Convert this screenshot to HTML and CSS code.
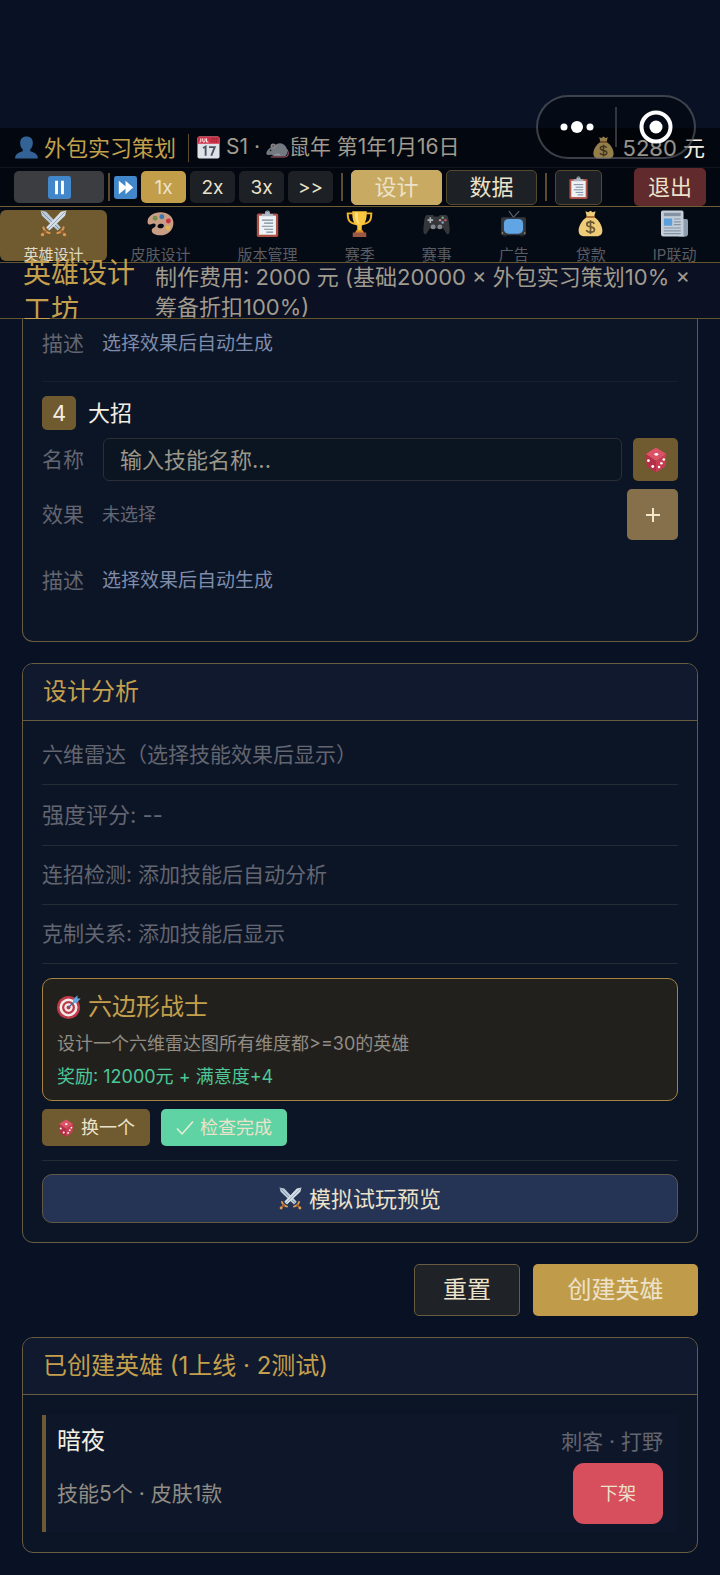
FILE: index.html
```html
<!DOCTYPE html>
<html lang="zh-CN">
<head>
<meta charset="utf-8">
<meta name="viewport" content="width=device-width, initial-scale=1">
<title>英雄设计工坊</title>
<link rel="stylesheet" href="styles.css">
</head>
<body>
<svg class="sprite" aria-hidden="true">
  <symbol id="i-user" viewBox="0 0 24 24"><path fill="#336296" d="M12 .6c4.2 0 6.6 2.6 6.6 6.4 0 3-1 5.500-2.700 6.900v2c2.500 1 8 1.800 8 7.500H.1c0-5.700 5.500-6.500 8-7.500v-2C6.400 12.500 5.400 10 5.400 7 5.400 3.200 7.800.6 12 .6z"/></symbol>
  <symbol id="i-calendar" viewBox="0 0 24 24"><rect x=".5" y=".5" width="23" height="23" rx="2" fill="#dfe3e8"/><path d="M.5 8V2.500a2 2 0 0 1 2-2h19a2 2 0 0 1 2 2V8z" fill="#cf3247"/><path d="M4 2.500v3q0 1-1.500.8M6 2.500v2.600q0 1.200 1.200 1.200t1.200-1.200V2.500M10 2.500v3.800h2" fill="none" stroke="#fff" stroke-width="1"/><path d="M15 3h7M15 5.500h7" stroke="#8e2233" stroke-width="1.200" stroke-dasharray="1.300 1"/><path d="M6.300 12.500 9 11v9.500M12.500 11.600h6l-3.600 9" fill="none" stroke="#4b5664" stroke-width="2"/></symbol>
  <symbol id="i-rat" viewBox="0 0 24 24"><path d="M5 22h14c4 0 4.500-2.500 4-5.500-.3-1.800-1-2.500-2-3" fill="none" stroke="#b9586c" stroke-width="1.100"/><path d="M.5 17C3 12.500 5 11.500 8 11c3-3.500 7-4.200 10-2.500 3.500 2 4.500 6 4 9.500-.4 2-1.500 3-3.500 3H8l-2-1.500-4 .3c-1 0-2-1.300-1.500-2.800z" fill="#737980"/><circle cx="7.500" cy="10.500" r="2.700" fill="#8f8589"/><circle cx="7.500" cy="10.500" r="1.400" fill="#62666d"/><circle cx="4.800" cy="15" r=".8" fill="#15181d"/><path d="M8 20q4-4 8 .5" fill="#90959b"/></symbol>
  <symbol id="i-money" viewBox="0 0 24 24"><path d="M7.500 1.200 10 2l2-1.400L14 2l2.500-.8-1.300 5c5 3 7.800 9 7.300 13-.3 3-2.500 4.200-5 4.200h-11c-2.500 0-4.700-1.200-5-4.200-.5-4 2.300-10 7.300-13z" fill="#efcd78"/><path d="M8.200 6.200h7.600" stroke="#a6642f" stroke-width="1.500"/><path d="M15.300 12.300c-.5-1.300-1.800-1.700-3.300-1.700-1.900 0-3.300.7-3.300 2.200 0 3.200 6.800 1.300 6.800 4.600 0 1.600-1.500 2.400-3.500 2.400-1.800 0-3.200-.6-3.700-2M12 9v12.400" fill="none" stroke="#6b5836" stroke-width="1.500"/></symbol>
  <symbol id="i-pause" viewBox="0 0 24 24"><rect width="24" height="24" rx="2.500" fill="#4187ca"/><path d="M7.400 5h3v14h-3zM13.600 5h3v14h-3z" fill="#fff"/></symbol>
  <symbol id="i-forward" viewBox="0 0 24 24"><rect width="24" height="24" rx="2.500" fill="#4187ca"/><path d="M5 5l7 5.800V5l8 7-8 7v-5.800L5 19z" fill="#fff"/></symbol>
  <symbol id="i-swords" viewBox="0 0 24 24"><path d="M.5.5l5 1L18.500 15.500l-2.800 2.700L1.700 5z" fill="#bccbd8"/><path d="M1.300 1.300 17 17" stroke="#718698" stroke-width=".7"/><path d="M23.500.5l-5 1L5.500 15.500l2.800 2.700L22.300 5z" fill="#d5dfe7"/><path d="M22.700 1.300 7 17" stroke="#8194a5" stroke-width=".7"/><path d="M3 15.500c.8 2.800 2.600 4.300 5.500 5M21 15.500c-.8 2.800-2.600 4.300-5.500 5" fill="none" stroke="#d99a4e" stroke-width="1.900" stroke-linecap="round"/><path d="M5.200 18.600 2.500 21.500M18.800 18.600l2.700 2.900" stroke="#9b5b35" stroke-width="2.200"/><circle cx="2.200" cy="21.900" r="1.500" fill="#d99a4e"/><circle cx="21.800" cy="21.900" r="1.500" fill="#d99a4e"/></symbol>
  <symbol id="i-palette" viewBox="0 0 24 24"><path fill-rule="evenodd" d="M12 2c6.600 0 11.500 4 11.500 9.500C23.500 18 18 22.500 12 22.500c-4.500 0-8-1.800-7.800-4.600.2-2.100 3-2 3.400-3.900.4-1.700-1-2.300-2.600-1.700-1.600.5-4.300 1.500-4.500-1.500C.2 5.500 6 2 12 2zm0 14.200c1.900 0 3-1 3-2.300s-1.300-2-3-1.700c-1.500.3-2.800 1.200-2.700 2.200.1 1.200 1.200 1.800 2.700 1.800z" fill="#c99e84"/><circle cx="7.200" cy="7.400" r="2.200" fill="#75904d"/><circle cx="13.200" cy="6" r="2.200" fill="#3b77b4"/><circle cx="19" cy="9.800" r="2.200" fill="#c83245"/><circle cx="18.700" cy="15.800" r="2.100" fill="#dfb64e"/></symbol>
  <symbol id="i-clipboard" viewBox="0 0 24 24"><rect x="2.500" y="3" width="19" height="21" rx="1.500" fill="#ad5147"/><path d="M4.500 5h15v17h-15z" fill="#eff2f5"/><path d="M7 5.500V3.500h3a2 2 0 0 1 4 0h3v2z" fill="#aeb8c4"/><circle cx="12" cy="2.500" r="1.700" fill="none" stroke="#aeb8c4" stroke-width=".9"/><path d="M7 9h10M9 11.700h8M7 14.400h10M9 17.100h8M11 19.700h6" stroke="#75899c" stroke-width="1"/></symbol>
  <symbol id="i-trophy" viewBox="0 0 24 24"><path d="M6 3H1.500C1.500 9 3 12 9 12.500M18 3h4.500c0 6-1.500 9-7.500 9.500" fill="none" stroke="#f2b32e" stroke-width="1.700"/><path d="M5.500 1h13c0 8-1.500 11-4.500 13v5h-4v-5C7 12 5.500 9 5.500 1z" fill="#fbc63f"/><path d="M8 2h2.500c0 5 .3 8 1.500 11-3-2-4-5-4-11z" fill="#ffe287"/><path d="M9 18h6l1 2.500H8z" fill="#d88b26"/><path d="M6 20h12v4H6z" fill="#9c5844"/></symbol>
  <symbol id="i-gamepad" viewBox="0 0 24 24"><path d="M4 4.500h5l1 1.200h4l1-1.200h5c2 0 2.500 2 3.200 7.500.6 4.500 1.100 9.500-1.200 9.500-1.800 0-2.600-3.700-4-5H6c-1.400 1.300-2.200 5-4 5-2.300 0-1.800-5-1.200-9.500C1.500 6.500 2 4.500 4 4.500z" fill="#343639"/><path d="M6.500 6.500v5M4 9h5" stroke="#aab0b7" stroke-width="1.500"/><circle cx="9" cy="15" r="2.200" fill="#81868c"/><circle cx="15" cy="15" r="2.200" fill="#81868c"/><circle cx="17.500" cy="6.800" r="1.100" fill="#7ca38c"/><circle cx="19.900" cy="9" r="1.100" fill="#c95660"/><circle cx="17.500" cy="11.200" r="1.100" fill="#8aa7c7"/><circle cx="15.200" cy="9" r="1.100" fill="#c2919d"/></symbol>
  <symbol id="i-tv" viewBox="0 0 24 24"><path d="M8 1l4 5.500L17 1" fill="none" stroke="#5c6066" stroke-width="1.100"/><rect x="1" y="6.500" width="22" height="16" rx="1.500" fill="#34393f"/><rect x="3.500" y="8" width="17" height="13" rx="4" fill="#62a5e5"/><path d="M3 22.500h3v1H3zM18 22.500h3v1h-3z" fill="#25282c"/><circle cx="22" cy="20.500" r=".7" fill="#b1a06a"/><circle cx="2.200" cy="20.500" r=".7" fill="#b1a06a"/></symbol>
  <symbol id="i-news" viewBox="0 0 24 24"><path d="M18 8h4.500a1.500 1.500 0 0 1 1.500 1.500V21a2.500 2.500 0 0 1-2.500 2.500H16z" fill="#8e9daf"/><path d="M1.500.5h17a1.500 1.500 0 0 1 1.500 1.500v20l1 1.500H2A2 2 0 0 1 0 21.500V2A1.500 1.500 0 0 1 1.500.5z" fill="#c4ced9"/><path d="M2.500 2.500h15v3h-15z" fill="#8492a3"/><path d="M2.500 7.500h7.500v6.500H2.500z" fill="#5c9edb"/><path d="M11.500 8h6M11.500 10.500h6M11.500 13h6M2.500 16h15M2.500 18.500h15M2.500 21h15" stroke="#8492a3" stroke-width="1"/></symbol>
  <symbol id="i-dice" viewBox="0 0 24 24"><path d="M12 .5 21.500 6.500 12 13 2.500 6.500z" fill="#dc5266"/><path d="M2.500 6.500 12 13v10.500L3.500 18z" fill="#b62f48"/><path d="M21.500 6.500 12 13v10.500L20.500 18z" fill="#c73d53"/><g fill="#fff"><ellipse cx="12.300" cy="6.800" rx="1.800" ry="1.300"/><circle cx="5" cy="12.600" r="1.300"/><circle cx="9" cy="18" r="1.300"/><circle cx="19.200" cy="11.500" r="1.200"/><circle cx="17" cy="15" r="1.200"/><circle cx="14.800" cy="18.500" r="1.200"/></g></symbol>
  <symbol id="i-target" viewBox="0 0 24 24"><circle cx="11.500" cy="12.500" r="11.500" fill="#bd3a49"/><circle cx="11.500" cy="12.500" r="9" fill="#f4ecec"/><circle cx="11.500" cy="12.500" r="6.500" fill="#bd3a49"/><circle cx="11.500" cy="12.500" r="4.200" fill="#f4ecec"/><circle cx="11.500" cy="12.500" r="2" fill="#bd3a49"/><path d="M11.500 12.500 19 5" stroke="#376895" stroke-width="1.300"/><path d="M16 4.500 20.500.3v3.200h3.200L19.500 8H16z" fill="#62a6e2"/></symbol>
</svg>

<div class="capsule">
  <button class="capsule-btn" type="button" aria-label="更多"><svg viewBox="0 0 40 40"><g fill="#fff"><circle cx="7" cy="20" r="3.500"/><circle cx="20" cy="20" r="6"/><circle cx="33" cy="20" r="3.500"/></g></svg></button>
  <span class="capsule-line"></span>
  <button class="capsule-btn" type="button" aria-label="关闭"><svg viewBox="0 0 40 40"><circle cx="20" cy="20" r="14.500" fill="none" stroke="#fff" stroke-width="4"/><circle cx="20" cy="20" r="6.500" fill="#fff"/></svg></button>
</div>

<header class="status">
  <svg class="icon"><use href="#i-user"/></svg>
  <span class="rank">外包实习策划</span>
  <span class="sep"></span>
  <svg class="icon"><use href="#i-calendar"/></svg>
  <span class="date">S1 · <svg class="icon rat"><use href="#i-rat"/></svg>鼠年 第1年1月16日</span>
  <span class="money"><svg class="icon"><use href="#i-money"/></svg>5280 元</span>
</header>

<div class="controls">
  <button class="ctl pause" type="button" aria-label="暂停"><svg class="icon"><use href="#i-pause"/></svg></button>
  <span class="sep"></span>
  <svg class="icon"><use href="#i-forward"/></svg>
  <button class="ctl speed on" type="button">1x</button>
  <button class="ctl speed" type="button">2x</button>
  <button class="ctl speed" type="button">3x</button>
  <button class="ctl speed" type="button">&gt;&gt;</button>
  <span class="sep wide"></span>
  <button class="ctl view on" type="button">设计</button>
  <button class="ctl view" type="button">数据</button>
  <span class="sep wide"></span>
  <button class="ctl board" type="button" aria-label="任务"><svg class="icon"><use href="#i-clipboard"/></svg></button>
  <button class="ctl exit" type="button">退出</button>
</div>

<nav class="tabs">
  <a class="tab on" href="#hero"><svg><use href="#i-swords"/></svg><span>英雄设计</span></a>
  <a class="tab" href="#skin"><svg><use href="#i-palette"/></svg><span>皮肤设计</span></a>
  <a class="tab" href="#version"><svg><use href="#i-clipboard"/></svg><span>版本管理</span></a>
  <a class="tab" href="#season"><svg><use href="#i-trophy"/></svg><span>赛季</span></a>
  <a class="tab" href="#match"><svg><use href="#i-gamepad"/></svg><span>赛事</span></a>
  <a class="tab" href="#ads"><svg><use href="#i-tv"/></svg><span>广告</span></a>
  <a class="tab" href="#loan"><svg><use href="#i-money"/></svg><span>贷款</span></a>
  <a class="tab" href="#ip"><svg><use href="#i-news"/></svg><span>IP联动</span></a>
</nav>

<div class="page-head">
  <h1>英雄设计工坊</h1>
  <p>制作费用: 2000 元 (基础20000 × 外包实习策划10% × 筹备折扣100%)</p>
</div>

<main>
  <section class="card skills">
    <div class="skill">
      <div class="field desc"><span class="label">描述</span><span class="auto">选择效果后自动生成</span></div>
    </div>
    <div class="skill full">
      <div class="skill-title"><span class="num">4</span><h3>大招</h3></div>
      <div class="field name">
        <label class="label" for="skill-name">名称</label>
        <input id="skill-name" type="text" placeholder="输入技能名称...">
        <button class="dice" type="button" aria-label="随机名称"><svg><use href="#i-dice"/></svg></button>
      </div>
      <div class="field"><span class="label">效果</span><span class="none">未选择</span><button class="add" type="button" aria-label="添加效果"><svg viewBox="0 0 16 16"><path d="M8 1v14M1 8h14" stroke="#f3e6c8" stroke-width="2"/></svg></button></div>
      <div class="field desc"><span class="label">描述</span><span class="auto">选择效果后自动生成</span></div>
    </div>
  </section>

  <section class="card">
    <h2>设计分析</h2>
    <div class="analysis">
      <p class="line">六维雷达（选择技能效果后显示）</p>
      <p class="line score">强度评分: --</p>
      <p class="line">连招检测: 添加技能后自动分析</p>
      <p class="line">克制关系: 添加技能后显示</p>
      <div class="challenge">
        <h3><svg><use href="#i-target"/></svg>六边形战士</h3>
        <p class="goal">设计一个六维雷达图所有维度都&gt;=30的英雄</p>
        <p class="reward">奖励: 12000元 + 满意度+4</p>
      </div>
      <div class="challenge-btns">
        <button class="small swap" type="button"><svg><use href="#i-dice"/></svg>换一个</button>
        <button class="small check" type="button"><svg viewBox="0 0 18 18"><path d="M1 9.500 6 15 17 2.500" fill="none" stroke="#e9efd9" stroke-width="1.500"/></svg>检查完成</button>
      </div>
      <div class="preview-wrap">
        <button class="preview" type="button"><svg class="icon"><use href="#i-swords"/></svg>模拟试玩预览</button>
      </div>
    </div>
  </section>

  <div class="actions">
    <button class="reset" type="button">重置</button>
    <button class="create" type="button">创建英雄</button>
  </div>

  <section class="card">
    <h2>已创建英雄 (1上线 · 2测试)</h2>
    <div class="heroes">
      <article class="hero">
        <div class="hero-row"><h3>暗夜</h3><span class="role">刺客 · 打野</span></div>
        <div class="hero-row"><span class="stats">技能5个 · 皮肤1款</span><button class="remove" type="button">下架</button></div>
      </article>
    </div>
  </section>
</main>
</body>
</html>
```
FILE: styles.css
```css
* { box-sizing: border-box; }

:root {
  --gold: #c4a04c;
  --brown: #705a30;
  --edge: #6a5c41;
  --cream: #ece2ca;
  --muted: #a09b8e;
  --dim: #636571;
}

body {
  margin: 0;
  padding-top: 128px;
  background: #091224;
  color: var(--muted);
  font-family: Inter, "Noto Sans CJK SC", sans-serif;
  font-size: 22px;
  font-weight: 400;
  line-height: 1;
  position: relative;
}

h1, h2, h3, p { margin: 0; font-weight: 400; }
button, input { font: inherit; color: inherit; margin: 0; }
button {
  display: flex;
  align-items: center;
  justify-content: center;
  padding: 0;
  border: 0;
  border-radius: 5px;
  color: var(--cream);
}
svg { display: block; flex: none; }
.sprite { position: absolute; width: 0; height: 0; }
.icon { width: 23px; height: 23px; }

/* floating mini-program capsule */
.capsule {
  position: absolute;
  z-index: 3;
  top: 95px;
  right: 24px;
  width: 160px;
  height: 64px;
  display: flex;
  align-items: center;
  border: 2px solid rgba(110, 112, 122, .55);
  border-radius: 32px;
  background: rgba(0, 0, 0, .38);
}
.capsule-btn { flex: 1; background: none; }
.capsule-btn svg { width: 40px; height: 40px; }
.capsule-line { width: 2px; height: 40px; background: #33363f; }

/* status line */
.status {
  display: flex;
  align-items: center;
  gap: 6px;
  height: 40px;
  padding: 0 15px;
  background: #030810;
  border-bottom: 1px solid #10151e;
  white-space: nowrap;
}
.rank { color: var(--gold); }
.date { font-size: 21px; }
.sep { width: 1px; height: 28px; background: #5d4c2c; }
.status .sep { margin: 0 2px 0 6px; }
.rat { display: inline-block; vertical-align: -5px; }
.money {
  display: flex;
  align-items: center;
  gap: 8px;
  margin-left: auto;
  color: #f2eee2;
}

/* speed and view controls */
.controls {
  display: flex;
  align-items: center;
  gap: 4px;
  height: 39px;
  padding: 0 14px;
  background: #030810;
  border-bottom: 1px solid #6f5d36;
}
.controls .sep { width: 2px; }
.controls .wide { margin: 0 4px; }
.ctl { height: 32px; background: #1d2024; }
.pause { width: 90px; background: #3b3d41; }
.speed { width: 45px; font-size: 19px; }
.speed.on { background: #c29e4b; }
.view { width: 91px; height: 35px; border: 1px solid #54482f; }
.view.on { background: #c9aa63; border-color: #c9aa63; }
.board { width: 47px; height: 35px; border: 1px solid #54482f; }
.exit { width: 72px; height: 38px; margin-left: auto; background: #612a2c; }

/* section tabs */
.tabs {
  display: flex;
  height: 56px;
  padding-top: 3px;
  background: #050b15;
  border-bottom: 1px solid #65552f;
}
.tab {
  flex: 1 1 auto;
  height: 51px;
  display: flex;
  flex-direction: column;
  align-items: center;
  gap: 8px;
  border-radius: 6px;
  color: #5b5c62;
  font-size: 15px;
  line-height: 20px;
  text-decoration: none;
  white-space: nowrap;
}
.tab svg { width: 27px; height: 27px; }
.tab.on { background: var(--brown); color: #e0dac9; }

/* workshop title and cost */
.page-head {
  display: flex;
  align-items: center;
  gap: 20px;
  height: 56px;
  padding: 2px 22px 0 23px;
  background: #0b1122;
  border-bottom: 1px solid #65552f;
}
.page-head h1 {
  flex: 0 0 4em;
  color: var(--gold);
  font-size: 28px;
  line-height: 37px;
}
.page-head p { line-height: 30px; }

main {
  position: relative;
  display: flex;
  flex-direction: column;
  gap: 21px;
  padding: 0 22px 22px;
  background: #091224;
}

.card {
  border: 1px solid var(--edge);
  border-radius: 11px;
  background: #0c1526;
}
.card h2 {
  padding: 0 20px;
  border-bottom: 1px solid var(--edge);
  border-radius: 10px 10px 0 0;
  background: #11192e;
  color: var(--gold);
  font-size: 24px;
  line-height: 56px;
}

/* skill form */
.skills {
  padding: 0 19px 23px;
  border-top: 0;
  border-radius: 0 0 11px 11px;
}
.skill { padding-bottom: 13px; }
.skill.full {
  display: flex;
  flex-direction: column;
  gap: 8px;
  padding-top: 14px;
  border-top: 1px solid #161f30;
}
.skill-title { display: flex; align-items: center; gap: 12px; }
.skill-title h3 { color: #f2eee2; font-size: 22px; line-height: 34px; }
.num {
  width: 34px;
  border-radius: 5px;
  background: var(--brown);
  color: #f2eee2;
  line-height: 34px;
  text-align: center;
}
.field { display: flex; align-items: center; }
.full .desc { margin-top: 8px; }
.desc { height: 49px; }
.label { flex: 0 0 60px; color: var(--dim); font-size: 21px; }
.auto { color: #7f8cac; font-size: 19px; }
.none { color: var(--dim); font-size: 18px; }
.field input {
  flex: 1;
  min-width: 0;
  height: 43px;
  margin-left: 1px;
  padding: 0 16px;
  border: 1px solid #2b2f35;
  border-radius: 6px;
  background: #0b1522;
}
.field input::placeholder { color: #9c9889; opacity: 1; }
.dice { width: 45px; height: 43px; margin-left: 11px; background: var(--brown); }
.dice svg { width: 26px; height: 26px; }
.add { width: 51px; height: 51px; margin-left: auto; background: #86704c; }
.add svg { width: 16px; height: 16px; }

/* analysis */
.analysis { padding: 5px 19px 19px; }
.line {
  border-bottom: 1px solid #252b35;
  color: var(--dim);
  font-size: 21px;
  line-height: 58px;
}
.score { font-size: 22px; line-height: 60px; }
.challenge {
  margin-top: 14px;
  padding: 11px 14px 7px;
  border: 1px solid #a58441;
  border-radius: 10px;
  background: #22201d;
}
.challenge h3 {
  display: flex;
  align-items: center;
  gap: 7px;
  margin-bottom: 3px;
  color: var(--gold);
  font-size: 24px;
  line-height: 34px;
}
.challenge h3 svg { width: 24px; height: 24px; }
.challenge p { font-size: 18px; line-height: 33px; }
.goal { color: #918d84; }
.challenge .reward { color: #4cc898; }
.challenge-btns { display: flex; gap: 11px; padding: 8px 0 14px; }
.small { gap: 6px; height: 37px; padding: 0 15px; font-size: 18px; }
.small svg { width: 18px; height: 18px; }
.swap { background: var(--brown); }
.check { background: #60d3a5; }
.preview-wrap { padding-top: 13px; border-top: 1px solid #252b35; }
.preview {
  width: 100%;
  height: 49px;
  gap: 7px;
  border: 1px solid #62584a;
  border-radius: 10px;
  background: #253355;
}

/* form actions */
.actions { display: flex; justify-content: flex-end; gap: 13px; }
.actions button { height: 52px; font-size: 24px; }
.reset { width: 106px; border: 1px solid var(--edge); background: #1f2226; }
.create { width: 165px; background: #c09c4a; }

/* created heroes */
.heroes { padding: 20px 19px; }
.hero {
  display: flex;
  flex-direction: column;
  gap: 4px;
  padding: 8px 15px 8px 11px;
  border-left: 4px solid #6d5935;
  background: #0e1729;
}
.hero-row { display: flex; align-items: center; justify-content: space-between; }
.hero h3 { color: #f2eee2; font-size: 24px; line-height: 36px; }
.role { color: var(--dim); font-size: 21px; }
.stats { font-size: 21px; color: #918d84; }
.remove {
  width: 90px;
  height: 61px;
  border-radius: 11px;
  background: #d74e5d;
  font-size: 18px;
}
```
